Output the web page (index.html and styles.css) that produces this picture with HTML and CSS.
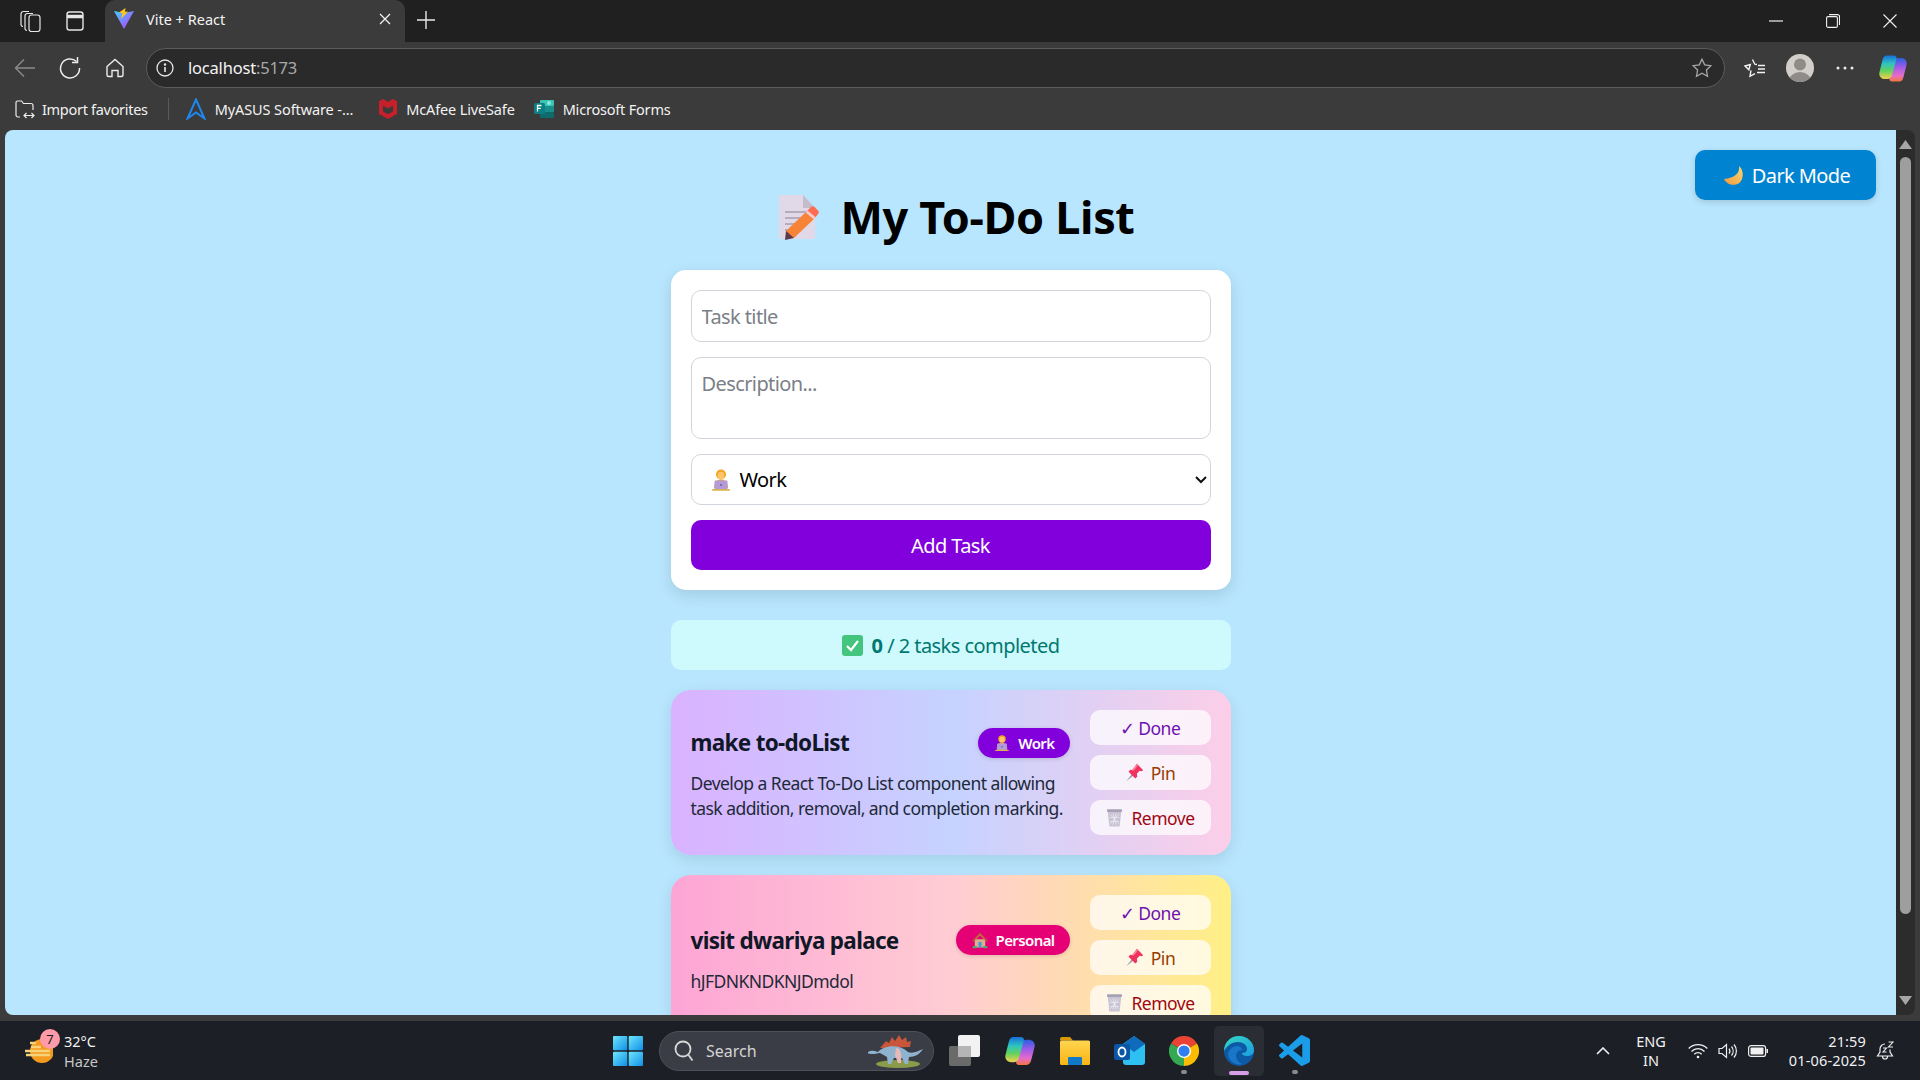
FILE: index.html
```html
<!DOCTYPE html>
<html lang="en">
<head>
<meta charset="utf-8">
<title>Vite + React</title>
<link rel="stylesheet" href="styles.css">
</head>
<body>
<svg class="defs" width="0" height="0">
  <defs>
    <linearGradient id="gMoon" x1="1" y1="0" x2="0" y2="1"><stop offset="0" stop-color="#f7d774"/><stop offset="1" stop-color="#f29a3c"/></linearGradient>
    <linearGradient id="gVite" x1="0" y1="0" x2="1" y2="1"><stop offset="0" stop-color="#41d1ff"/><stop offset="1" stop-color="#bd34fe"/></linearGradient>
    <linearGradient id="gStart" x1="0" y1="0" x2="1" y2="1"><stop offset="0" stop-color="#6fe6fb"/><stop offset="1" stop-color="#0f8fe8"/></linearGradient>
    <linearGradient id="gCopA" x1="0" y1="0" x2="0" y2="1"><stop offset="0" stop-color="#1670dc"/><stop offset=".35" stop-color="#2fc4c0"/><stop offset=".65" stop-color="#62d25e"/><stop offset="1" stop-color="#f6d14b"/></linearGradient>
    <linearGradient id="gCopB" x1="0" y1="0" x2="0" y2="1"><stop offset="0" stop-color="#2a5fe0"/><stop offset=".4" stop-color="#a25ce8"/><stop offset=".75" stop-color="#e66cc8"/><stop offset="1" stop-color="#f5763a"/></linearGradient>
    <linearGradient id="gEdge" x1="0" y1="0" x2="1" y2="1"><stop offset="0" stop-color="#36d9c0"/><stop offset="1" stop-color="#1b9de2"/></linearGradient>
    <linearGradient id="gFolder" x1="0" y1="0" x2="0" y2="1"><stop offset="0" stop-color="#ffd54f"/><stop offset="1" stop-color="#f9b515"/></linearGradient>
    <symbol id="e-tech" viewBox="0 0 24 24">
      <circle cx="12" cy="6.5" r="5" fill="#f2a31f"/>
      <ellipse cx="12" cy="7.5" rx="3.4" ry="3.8" fill="#ffc56a"/>
      <path d="M5 20c0-6 3-8.500 7-8.500s7 2.500 7 8.500z" fill="#e5a63a"/>
      <rect x="5.500" y="12.500" width="13" height="9" rx="1" fill="#b39ad8"/>
      <rect x="3" y="21" width="18" height="1.800" rx=".9" fill="#d9b24a"/>
      <circle cx="12" cy="17" r="1" fill="#6d5a99"/>
    </symbol>
    <symbol id="e-pin" viewBox="0 0 24 24">
      <path d="M1.500 23 9.500 13 11.500 15z" fill="#9aa0a6"/>
      <path d="M15 1 23 9 21 10.500 18.500 9.800 15 13.500 15.500 17.500 13 19.500 4.500 11 6.500 8.500 10.500 9 14.200 5.500 13.500 3z" fill="#f0325f"/>
      <path d="M15 1 16.500 2.500 11 9.500 8.500 9.200z" fill="#ff7d96"/>
    </symbol>
    <symbol id="e-bin" viewBox="0 0 24 24">
      <path d="M3.500 4.500h17L18.500 23.500h-13z" fill="#c9c4d4"/>
      <path d="M6.500 8l11 12M17.500 8l-11 12M10 7l4 14M14 7l-4 14M6 12h12M6.500 17h11" stroke="#f1eef5" stroke-width=".8" fill="none"/>
      <rect x="2.500" y="1.500" width="19" height="3.500" rx="1" fill="#a7a1b5"/>
    </symbol>
    <symbol id="e-home" viewBox="0 0 24 24">
      <rect x="5" y="11" width="14" height="11" fill="#d9b18c"/>
      <path d="M12 2 1.500 13l1.500 1.500L12 5.500l9 9 1.500-1.500z" fill="#b5563a"/>
      <path d="M12 5.500 5 12.500V11l7-7 7 7v1.500z" fill="#d6734f"/>
      <rect x="10" y="14.500" width="4" height="7.500" fill="#3f9fd6"/>
      <rect x="2" y="20" width="6" height="3" rx="1.500" fill="#4caf6a"/>
      <rect x="16" y="20" width="6" height="3" rx="1.500" fill="#4caf6a"/>
    </symbol>
    <symbol id="i-copilot" viewBox="0 0 28 27">
      <path d="M20 26.500h-7c-2 0-3-1.500-2.500-3.500L15 7c.6-2.500 2.500-4 4.500-4H22c4 0 6.500 3 5.500 7l-3 12c-.7 3-2 4.500-4.500 4.500z" fill="url(#gCopB)"/>
      <path d="M8 .5h7c2 0 3 1.500 2.500 3.500L13 20c-.6 2.500-2.500 4-4.500 4H6c-4 0-6.500-3-5.500-7l3-12C4.200 2 5.500.5 8 .5z" fill="url(#gCopA)"/>
    </symbol>
  </defs>
</svg>

<div class="tabstrip">
  <span class="tb-btn"><svg width="22" height="22" viewBox="0 0 22 22" fill="none" stroke="#e6e6e6" stroke-width="1.200"><rect x="10" y="5" width="11" height="16.500" rx="2.500"/><path d="M8 20.500a2 2 0 0 1-2-2V6a2.500 2.500 0 0 1 2.500-2.500H14"/><path d="M4 16.500a2 2 0 0 1-2-1.900V4a2.500 2.500 0 0 1 2.500-2.500H10"/></svg></span>
  <span class="tb-btn"><svg width="22" height="22" viewBox="0 0 22 22" fill="none" stroke="#e6e6e6" stroke-width="1.400"><rect x="3" y="2" width="16" height="18" rx="2.500"/><path d="M3 6.500h16" stroke-width="3.500"/></svg></span>
  <div class="tab">
    <svg class="tab-fav" width="20" height="22" viewBox="0 0 20 22"><path d="M0 3 10 21 20 3 10 5z" fill="url(#gVite)"/><path d="M11.500 0 5 4.500l3.500.8L7 11l7-7.500-3 .3z" fill="#ffc517"/></svg>
    <span class="tab-title">Vite + React</span>
    <svg class="tab-x" width="12" height="12" viewBox="0 0 12 12" stroke="#f0f0f0" stroke-width="1.300"><path d="M1 1l10 10M11 1 1 11"/></svg>
  </div>
  <span class="tb-plus"><svg width="18" height="18" viewBox="0 0 18 18" stroke="#e8e8e8" stroke-width="1.400"><path d="M9 0v18M0 9h18"/></svg></span>
  <div class="win-ctrls">
    <span class="win-btn"><svg width="14" height="2" viewBox="0 0 14 2"><path d="M0 1h14" stroke="#f0f0f0" stroke-width="1.200"/></svg></span>
    <span class="win-btn"><svg width="14" height="14" viewBox="0 0 14 14" fill="none" stroke="#f0f0f0" stroke-width="1.100"><rect x=".6" y="2.600" width="10.800" height="10.800" rx="1.500"/><path d="M3 .6h8.500a2 2 0 0 1 2 2V11"/></svg></span>
    <span class="win-btn"><svg width="14" height="14" viewBox="0 0 14 14" stroke="#f0f0f0" stroke-width="1.100"><path d="M.5.500l13 13M13.500.500l-13 13"/></svg></span>
  </div>
</div>

<div class="toolbar">
  <span class="tool-btn"><svg width="22" height="20" viewBox="0 0 22 20" fill="none" stroke="#8b8b8b" stroke-width="1.400"><path d="M21 10H1.500M10 1.500 1.500 10l8.500 8.500"/></svg></span>
  <span class="tool-btn"><svg width="22" height="22" viewBox="0 0 22 22" fill="none" stroke="#ececec" stroke-width="1.500"><path d="M17.500 4.500A9.500 9.500 0 1 0 20.500 11"/><path d="M18.500 0v5.500H13"/></svg></span>
  <span class="tool-btn"><svg width="20" height="20" viewBox="0 0 20 20" fill="none" stroke="#ececec" stroke-width="1.400"><path d="M2 8.500 10 1.500l8 7V17a1.500 1.500 0 0 1-1.500 1.500H13v-6H7v6H3.500A1.500 1.500 0 0 1 2 17z"/></svg></span>
  <div class="address">
    <span class="addr-info"><svg width="18" height="18" viewBox="0 0 18 18" fill="none" stroke="#e8e8e8" stroke-width="1.300"><circle cx="9" cy="9" r="8"/><path d="M9 8v5" stroke-width="1.600"/><circle cx="9" cy="5.500" r=".6" fill="#e8e8e8"/></svg></span>
    <span class="addr-host">localhost</span><span class="addr-port">:5173</span>
    <svg class="addr-star" width="20" height="20" viewBox="0 0 20 20" fill="none" stroke="#a8a8a8" stroke-width="1.300"><path d="M10 1.200l2.700 5.700 6.200.8-4.500 4.300 1.100 6.200L10 15.200l-5.500 3 1.100-6.200L1.100 7.700l6.200-.8z"/></svg>
  </div>
  <span class="tool-btn"><svg width="22" height="20" viewBox="0 0 22 20" fill="none" stroke="#f2f2f2" stroke-width="1.400"><path d="M8.500 1.500l2.300 4.700 2.200.3M7 12.300l-1 6 5-2.700M4.800 11.800 1 8l5.300-1.500z"/><path d="M14 7.500h7M14 11h7M13 14.500h8"/></svg></span>
  <span class="tool-btn tool-avatar"><svg width="28" height="28" viewBox="0 0 28 28"><defs><clipPath id="cAv"><circle cx="14" cy="14" r="14"/></clipPath></defs><circle cx="14" cy="14" r="14" fill="#d2cfcb"/><g clip-path="url(#cAv)" fill="#8e8b88"><circle cx="14" cy="10.500" r="6"/><ellipse cx="14" cy="27" rx="11" ry="9"/></g></svg></span>
  <span class="tool-btn"><svg width="18" height="4" viewBox="0 0 18 4" fill="#ececec"><circle cx="2" cy="2" r="1.500"/><circle cx="9" cy="2" r="1.500"/><circle cx="16" cy="2" r="1.500"/></svg></span>
  <span class="tool-btn"><svg class="copilot-top" width="28" height="27"><use href="#i-copilot"/></svg></span>
</div>

<div class="bookmarks">
  <span class="bm bm-import"><svg width="20" height="20" viewBox="0 0 20 20" fill="none" stroke="#ececec" stroke-width="1.200"><path d="M5 18H3a2 2 0 0 1-2-2V3.500A1.500 1.500 0 0 1 2.500 2h4l2 2.500H16A2 2 0 0 1 18 6.500V11"/><path d="M9 16.500h10M11.500 14l-2.500 2.500 2.500 2.500M16.500 14l2.500 2.500-2.500 2.500"/></svg>Import favorites</span>
  <span class="bm-sep"></span>
  <span class="bm bm-asus"><svg width="20" height="22" viewBox="0 0 20 22" fill="none" stroke="#1e88f0" stroke-width="2"><path d="M10 1.500 1.500 20.500 10 14.500l8.500 6z"/></svg>MyASUS Software -...</span>
  <span class="bm bm-mcafee"><svg width="18" height="20" viewBox="0 0 18 20" fill="#c8202a"><path d="M0 2l4.500-2L9 3l4.500-3L18 2v13l-9 5-9-5zM4 6.500v6l5 2.800 5-2.800v-6L9 9.500z"/></svg>McAfee LiveSafe</span>
  <span class="bm bm-forms"><svg width="20" height="20" viewBox="0 0 20 20"><rect x="6" y="1" width="14" height="6" rx="1" fill="#37c6b5"/><rect x="6" y="7" width="14" height="6" fill="#1a8e8a"/><rect x="6" y="13" width="14" height="6" rx="1" fill="#0f6a6c"/><circle cx="15" cy="4" r="2" fill="#8ee6d8"/><rect x="0" y="4" width="11" height="11" rx="1.500" fill="#0b7f84"/><path d="M3.500 12.500v-6h4M3.500 9.300h3.300" stroke="#fff" stroke-width="1.300" fill="none"/></svg>Microsoft Forms</span>
</div>

<div class="viewport">
  <main class="page">
    <button class="theme-btn"><svg class="ic-moon" width="20" height="19" viewBox="0 0 20 19"><path d="M15 0c1 6-3 12-15 13 3 6 10 7 14.500 4.500S21 5 15 0z" fill="url(#gMoon)"/></svg>Dark Mode</button>
    <h1 class="heading">
      <svg class="ic-memo" width="40" height="45" viewBox="0 0 40 45">
        <path d="M0 0h24l12 13v31H0z" fill="#e2d9e8"/>
        <path d="M24 0l12 13H24z" fill="#c4bccb"/>
        <path d="M6 17h22M6 23h22M6 29h14M6 35h8" stroke="#a79fb0" stroke-width="1.600"/>
        <path d="M8 43l-1-7L28 16l8 7-21 20z" fill="#f78336"/>
        <path d="M28 16l4-4c1.500-1 2.500-1 3.500 0l3.500 3.500c1 1 1 2 0 3.500l-3 4z" fill="#ff6a52"/>
        <path d="M26.500 17.500l8.500 7 2-2-8.500-7z" fill="#f3c9cc"/>
        <path d="M7 36l8 7-9 2z" fill="#5b3a4a"/>
      </svg>
      <span>My To-Do List</span>
    </h1>
    <form class="form-card">
      <input class="field field-input" type="text" placeholder="Task title">
      <textarea class="field field-area" placeholder="Description..."></textarea>
      <div class="field field-select">
        <svg class="ic-opt" width="24" height="24"><use href="#e-tech"/></svg>
        <span>Work</span>
        <svg class="chev" width="12" height="8" viewBox="0 0 12 8" fill="none" stroke="#111" stroke-width="2"><path d="M1 1l5 5 5-5"/></svg>
      </div>
      <button class="add-btn" type="button">Add Task</button>
    </form>
    <div class="progress">
      <svg width="21" height="21" viewBox="0 0 21 21"><rect width="21" height="21" rx="3" fill="#43c57e"/><path d="M5 11l4 4 7-9" fill="none" stroke="#fff" stroke-width="2.200"/></svg>
      <span><b>0</b> / 2 tasks completed</span>
    </div>
    <article class="task task-work">
      <div class="task-main">
        <div class="task-head">
          <h2 class="task-title">make to-doList</h2>
          <span class="badge badge-work"><svg width="18" height="18"><use href="#e-tech"/></svg>Work</span>
        </div>
        <p class="task-desc">Develop a React To-Do List component allowing task addition, removal, and completion marking.</p>
      </div>
      <div class="actions">
        <button class="act act-done">✓ Done</button>
        <button class="act act-pin"><svg width="19" height="19"><use href="#e-pin"/></svg>Pin</button>
        <button class="act act-remove"><svg width="19" height="19"><use href="#e-bin"/></svg>Remove</button>
      </div>
    </article>
    <article class="task task-personal">
      <div class="task-main">
        <div class="task-head">
          <h2 class="task-title">visit dwariya palace</h2>
          <span class="badge badge-personal"><svg width="18" height="18"><use href="#e-home"/></svg>Personal</span>
        </div>
        <p class="task-desc">hJFDNKNDKNJDmdol</p>
      </div>
      <div class="actions">
        <button class="act act-done">✓ Done</button>
        <button class="act act-pin"><svg width="19" height="19"><use href="#e-pin"/></svg>Pin</button>
        <button class="act act-remove"><svg width="19" height="19"><use href="#e-bin"/></svg>Remove</button>
      </div>
    </article>
  </main>
  <div class="scrollbar">
    <svg width="13" height="9" viewBox="0 0 13 9"><path d="M6.500 0l6.500 9H0z" fill="#a6a6a6"/></svg>
    <span class="thumb"></span>
    <svg width="13" height="9" viewBox="0 0 13 9"><path d="M6.500 9 13 0H0z" fill="#a6a6a6"/></svg>
  </div>
</div>

<footer class="taskbar">
  <div class="weather">
    <span class="weather-ic">
      <svg width="28" height="26" viewBox="0 0 28 26"><circle cx="17" cy="13" r="12" fill="#f39a1f"/><path d="M5 5h6M6 9h10M0 13h25M1 17h24" stroke="#f6d27a" stroke-width="2.500"/></svg>
      <span class="weather-badge">7</span>
    </span>
    <span class="weather-text"><span>32°C</span><span class="haze">Haze</span></span>
  </div>
  <div class="tb-center">
    <span class="app app-start"><svg width="30" height="30" viewBox="0 0 30 30" fill="url(#gStart)"><rect width="14.300" height="14.300" rx="1"/><rect x="15.700" width="14.300" height="14.300" rx="1"/><rect y="15.700" width="14.300" height="14.300" rx="1"/><rect x="15.700" y="15.700" width="14.300" height="14.300" rx="1"/></svg></span>
    <div class="search">
      <svg width="20" height="22" viewBox="0 0 20 22" fill="none" stroke="#d8d8d8" stroke-width="1.800"><circle cx="9" cy="9" r="7.500"/><path d="M14.500 15l4 5.500"/></svg>
      <span class="search-text">Search</span>
      <svg class="dino" width="58" height="34" viewBox="0 0 58 34">
        <ellipse cx="30" cy="30" rx="22" ry="4" fill="#8a9c4a"/>
        <path d="M12 14l6-7 3 2 3-6 3 4 4-6 3 5 4-3 1 5 4-1-1 6z" fill="#c9553a"/>
        <path d="M0 18c3-2 6-1 10 0 5-6 20-9 30 0 5 2 10-1 15-3-3 5-8 8-14 8l-1 7h-3l-3-6-8 0-3 6h-3l-1-7-7-4c-5 1-12 2-15-1z" fill="#8fb2cf"/>
        <path d="M28 14c4 0 6 4 5 15h-3l-3-8z" fill="#e7b8b8"/>
      </svg>
    </div>
    <span class="app app-view"><svg width="31" height="31" viewBox="0 0 31 31"><rect y="11" width="22" height="20" rx="2" fill="#6a6a6a"/><rect x="9" y="0" width="22" height="22" rx="2" fill="#f2f2f2"/><rect x="9" y="11" width="13" height="11" fill="#b5b5b5"/></svg></span>
    <span class="app app-cop"><svg width="30" height="30"><use href="#i-copilot"/></svg></span>
    <span class="app app-files"><svg width="30" height="28" viewBox="0 0 30 28"><path d="M0 2a2 2 0 0 1 2-2h8l3 3.500H0z" fill="#d99a08"/><rect y="3.500" width="30" height="24.500" rx="1.500" fill="url(#gFolder)"/><rect x="8" y="20" width="14" height="8" rx="1" fill="#1278c8"/></svg></span>
    <span class="app app-out"><svg width="31" height="30" viewBox="0 0 31 30"><path d="M9 8 20 0l11 8v18a3 3 0 0 1-3 3H12a3 3 0 0 1-3-3z" fill="#2dc0f0"/><path d="M20 0l11 8-11 8-11-8z" fill="#0f6cbd"/><rect y="8" width="16" height="16" rx="2" fill="#0a57a8"/><ellipse cx="8" cy="16" rx="3.500" ry="4.500" fill="none" stroke="#fff" stroke-width="1.800"/></svg></span>
    <span class="app app-chrome"><svg width="30" height="30" viewBox="0 0 24 24"><path d="M12 12 1.600 6A12 12 0 0 1 22.400 6z" fill="#ea4335"/><path d="M12 12 22.400 6A12 12 0 0 1 12 24z" fill="#fbbc04"/><path d="M12 12V24A12 12 0 0 1 1.600 6z" fill="#34a853"/><circle cx="12" cy="12" r="5.600" fill="#fff"/><circle cx="12" cy="12" r="4.500" fill="#2f7df0"/></svg><i class="dot"></i></span>
    <span class="app app-edge"><svg width="30" height="30" viewBox="0 0 30 30"><circle cx="15" cy="15" r="15" fill="#0c5aa6"/><path d="M0 15C0 6 7 0 15 0c9 0 15 7 15 14 0 4-3 6-7 6-3 0-5-1-5-3 3 0 5-1 5-4 0-4-4-7-9-7C7 6 3 10 0 15z" fill="url(#gEdge)"/><path d="M4 17c2-4 5-7 9-7 3 0 5 2 5 4-5 0-7 4-5 9 1 3 3 4 6 5-8 2-15-3-15-11z" fill="#1976c8"/></svg><i class="bar"></i></span>
    <span class="app app-code"><svg width="31" height="31" viewBox="0 0 24 24"><path fill="#1b9ce8" d="M23.150 2.587 18.210.21a1.494 1.494 0 0 0-1.705.29l-9.460 8.630-4.120-3.128a.999.999 0 0 0-1.276.057L.327 7.261A1 1 0 0 0 .326 8.740L3.899 12 .326 15.260a1 1 0 0 0 .001 1.479L1.650 17.940a.999.999 0 0 0 1.276.057l4.120-3.128 9.460 8.630a1.492 1.492 0 0 0 1.704.290l4.942-2.377A1.500 1.500 0 0 0 24 20.060V3.939a1.500 1.500 0 0 0-.850-1.352zm-5.146 14.861L10.826 12l7.178-5.448v10.896z"/></svg><i class="dot"></i></span>
  </div>
  <div class="tray">
    <svg class="tray-chev" width="14" height="8" viewBox="0 0 14 8" fill="none" stroke="#f0f0f0" stroke-width="1.600"><path d="M1 7l6-6 6 6"/></svg>
    <span class="lang"><span>ENG</span><span>IN</span></span>
    <svg class="tray-wifi" width="20" height="16" viewBox="0 0 20 16" fill="none" stroke="#f0f0f0" stroke-width="1.300"><path d="M.7 5.500a13 13 0 0 1 18.600 0M3.500 8.500a9 9 0 0 1 13 0M6.300 11.300a5 5 0 0 1 7.400 0"/><circle cx="10" cy="14" r="1.300" fill="#f0f0f0" stroke="none"/></svg>
    <svg class="tray-vol" width="20" height="16" viewBox="0 0 20 16" fill="none" stroke="#f0f0f0" stroke-width="1.200"><path d="M1 5.500h3L8.500 1.500v13L4 10.500H1z"/><path d="M11 5.500a4 4 0 0 1 0 5M13.500 3.500a7 7 0 0 1 0 9M16 1.500a10 10 0 0 1 0 13"/></svg>
    <svg class="tray-bat" width="20" height="12" viewBox="0 0 20 12"><rect x=".6" y=".6" width="17" height="10.800" rx="2.500" fill="none" stroke="#f0f0f0" stroke-width="1.200"/><rect x="2.500" y="2.500" width="13" height="7" rx="1" fill="#f0f0f0"/><rect x="18.500" y="4" width="1.500" height="4" fill="#f0f0f0"/></svg>
    <span class="clock"><span>21:59</span><span>01-06-2025</span></span>
    <svg class="tray-bell" width="18" height="20" viewBox="0 0 18 20" fill="none" stroke="#f0f0f0" stroke-width="1.200"><path d="M9 3a5 5 0 0 0-5 5v3l-2.500 4h15L14 11V8.500M6.500 15.500a2.500 2.500 0 0 0 5 0"/><path d="M7 7h3.500L7 11h3.500M12.500 1H17l-4.500 5H17" stroke-width="1.100"/></svg>
  </div>
</footer>
</body>
</html>
```

FILE: styles.css
```css
* { box-sizing: border-box; }
html, body { margin: 0; height: 100%; overflow: hidden; }
body {
  display: flex;
  flex-direction: column;
  height: 100vh;
  background: #3b3b3b;
  font-family: "Noto Sans", "Open Sans", sans-serif;
  color: #111;
}
.defs { position: absolute; }
svg { display: block; flex: none; }

/* Browser chrome */
.tabstrip {
  height: 42px;
  flex: none;
  display: flex;
  align-items: stretch;
  background: #202020;
  padding: 0 1.5px 0 7.5px;
}
.tb-btn, .tool-btn {
  width: 45px;
  flex: none;
  display: flex;
  align-items: center;
  justify-content: center;
}
.tab {
  width: 300px;
  margin-left: 7.5px;
  display: flex;
  align-items: center;
  padding: 0 14px 4px 9px;
  background: #3b3b3b;
  border-radius: 10px 10px 0 0;
  color: #f2f2f2;
  font-size: 14.5px;
  letter-spacing: 0;
}
.tab-title { margin-left: 12px; flex: 1; }
.tb-plus {
  width: 42px;
  padding-bottom: 2px;
  display: flex;
  align-items: center;
  justify-content: center;
}
.win-ctrls { margin-left: auto; display: flex; }
.win-btn {
  width: 57px;
  display: flex;
  align-items: center;
  justify-content: center;
}
.toolbar {
  height: 46px;
  flex: none;
  display: flex;
  align-items: center;
  padding: 6px 8px 0 2.5px;
}
.address {
  flex: 1;
  height: 40px;
  margin: 0 7.5px 0 8.5px;
  display: flex;
  align-items: center;
  background: #2a2a2a;
  border: 1px solid #5c5c5c;
  border-radius: 20px;
  padding: 0 12px 2px 9px;
  font-size: 16.5px;
  letter-spacing: -0.2px;
}
.addr-info { width: 32px; display: flex; margin-top: 2px; }
.addr-host { color: #f4f4f4; }
.addr-port { color: #a8a8a8; }
.addr-star { margin-left: auto; margin-top: 2px; }
.copilot-top { margin-left: 6px; }
.bookmarks {
  height: 42px;
  flex: none;
  display: flex;
  align-items: center;
  padding-left: 15px;
  font-size: 14.5px;
  letter-spacing: -0.1px;
  color: #f2f2f2;
}
.bm { display: flex; align-items: center; gap: 7px; white-space: nowrap; }
.bm-import { letter-spacing: -0.3px; }
.bm-sep { width: 1px; height: 22px; background: #5a5a5a; margin: 0 17px 0 20px; }
.bm-asus { gap: 9px; }
.bm-mcafee { margin-left: 26px; gap: 9px; letter-spacing: -0.15px; }
.bm-forms { margin-left: 19px; gap: 9px; letter-spacing: -0.2px; }

/* Viewport */
.viewport {
  height: 885px;
  flex: none;
  display: flex;
  padding: 0 5px;
}
.page {
  position: relative;
  flex: 1;
  overflow: hidden;
  background: #b8e6fe;
  border-radius: 8px 0 0 8px;
  display: flex;
  flex-direction: column;
  align-items: center;
  padding-top: 62px;
  font-size: 20px;
}
.scrollbar {
  width: 19px;
  flex: none;
  background: #2c2c2c;
  border-radius: 0 8px 8px 0;
  display: flex;
  flex-direction: column;
  align-items: center;
  padding: 10px 0 10px;
}
.thumb {
  width: 11px;
  height: 757px;
  margin: 8px 0 auto;
  border-radius: 6px;
  background: #9e9e9e;
}
.theme-btn {
  position: absolute;
  top: 20px;
  right: 20px;
  width: 181px;
  height: 50px;
  border: 0;
  border-radius: 10px;
  background: #0084d1;
  color: #fff;
  font: inherit;
  letter-spacing: -0.6px;
  display: flex;
  align-items: center;
  justify-content: center;
  gap: 8px;
  padding: 0 0 0 3px;
  box-shadow: 0 2px 6px rgba(0,0,0,.15);
}
.heading {
  margin: 0 0 28px;
  height: 50px;
  padding-left: 13px;
  display: flex;
  align-items: center;
  gap: 21px;
  font-size: 45px;
  line-height: 50px;
  font-weight: 700;
  letter-spacing: -0.35px;
  color: #000;
}
.form-card {
  width: 560px;
  height: 320px;
  flex: none;
  padding: 20px;
  background: #fff;
  border-radius: 15px;
  box-shadow: 0 5px 15px rgba(0,0,0,.12);
  display: flex;
  flex-direction: column;
  gap: 15px;
}
.field {
  width: 100%;
  display: block;
  border: 1.5px solid #d1d5dc;
  border-radius: 10px;
  background: #fff;
  padding: 10px;
  font: inherit;
  letter-spacing: -0.6px;
  color: #000;
  outline: none;
}
.field::placeholder { color: #7b7f87; opacity: 1; }
.field-input { height: 52px; }
.field-area { height: 82px; padding-top: 12px; resize: none; }
.field-select {
  height: 51px;
  display: flex;
  align-items: center;
  padding: 0 3px 0 17px;
  gap: 7px;
}
.chev { margin-left: auto; }
.add-btn {
  height: 50px;
  flex: none;
  border: 0;
  border-radius: 10px;
  background: #8200db;
  color: #fff;
  font: inherit;
  letter-spacing: -0.6px;
}
.progress {
  width: 560px;
  height: 50px;
  margin-top: 30px;
  flex: none;
  display: flex;
  align-items: center;
  justify-content: center;
  gap: 9px;
  background: #cefafe;
  border-radius: 10px;
  color: #00786f;
  letter-spacing: -0.55px;
}
.task {
  width: 560px;
  height: 165px;
  flex: none;
  margin-top: 20px;
  padding: 20px;
  display: flex;
  gap: 20px;
  border-radius: 20px;
  box-shadow: 0 5px 15px rgba(0,0,0,.1);
}
.task-work { background: linear-gradient(90deg, #dab2ff, #c6d2ff 50%, #fccee8); }
.task-personal { background: linear-gradient(90deg, #fda5d5, #ffccd3 50%, #fff085); }
.task-main {
  flex: 1;
  min-width: 0;
  padding-top: 3px;
  display: flex;
  flex-direction: column;
  justify-content: center;
}
.task-head {
  display: flex;
  align-items: center;
  justify-content: space-between;
  margin-bottom: 13px;
}
.task-title {
  margin: 0;
  font-size: 22.5px;
  font-weight: 700;
  letter-spacing: -0.7px;
  color: #101828;
  white-space: nowrap;
}
.badge {
  height: 30px;
  padding: 0 15px;
  display: flex;
  align-items: center;
  gap: 7px;
  border-radius: 15px;
  color: #fff;
  font-size: 15px;
  font-weight: 600;
  letter-spacing: -0.6px;
  box-shadow: 0 1px 4px rgba(0,0,0,.15);
}
.badge-work { background: #8200db; }
.badge-personal { background: #e60076; }
.task-desc {
  margin: 0;
  font-size: 17.5px;
  line-height: 25px;
  letter-spacing: -0.55px;
  color: #1e2939;
}
.actions {
  width: 121px;
  flex: none;
  display: flex;
  flex-direction: column;
  gap: 10px;
}
.act {
  height: 35px;
  flex: none;
  border: 0;
  border-radius: 10px;
  background: rgba(255,255,255,.72);
  font: inherit;
  font-size: 17.5px;
  letter-spacing: -0.5px;
  display: flex;
  align-items: center;
  justify-content: center;
  gap: 7px;
  padding: 0;
}
.act-done { color: #6e11b0; }
.act-pin { color: #973c00; }
.act-remove { color: #9f0712; }

/* Taskbar */
.taskbar {
  height: 59px;
  margin-top: 6px;
  flex: none;
  display: flex;
  align-items: center;
  background: #1c1f26;
  color: #f2f2f2;
  font-size: 14.5px;
  letter-spacing: 0;
}
.weather { width: 613px; flex: none; display: flex; align-items: center; padding-left: 25px; gap: 11px; }
.weather-ic { position: relative; display: block; }
.weather-badge {
  position: absolute;
  top: -9px;
  right: -7px;
  width: 20px;
  height: 20px;
  border-radius: 50%;
  background: #ff9aa8;
  color: #1a1a1a;
  display: flex;
  align-items: center;
  justify-content: center;
  font-size: 13px;
}
.weather-text { display: flex; flex-direction: column; line-height: 20px; }
.haze { color: #c8c8c8; }
.tb-center { display: flex; align-items: center; }
.app {
  position: relative;
  display: flex;
  align-items: center;
  justify-content: center;
  flex: none;
}
.app-start { width: 30px; }
.search {
  width: 275px;
  height: 40px;
  margin-left: 16px;
  flex: none;
  display: flex;
  align-items: center;
  padding: 0 7px 0 14px;
  gap: 12px;
  border-radius: 20px;
  background: #3a3d45;
  border: 1px solid #4e5159;
  color: #d4d4d4;
  font-size: 16px;
}
.dino { margin-left: auto; }
.app-view { width: 31px; margin-left: 15px; }
.app-cop { width: 30px; margin-left: 25px; }
.app-files { width: 30px; margin-left: 25px; }
.app-out { width: 31px; margin-left: 24px; }
.app-chrome { width: 30px; margin-left: 24px; }
.app-edge {
  width: 50px;
  height: 50px;
  margin-left: 15px;
  background: #2a2d34;
  border-radius: 5px;
}
.app-code { width: 31px; margin-left: 15px; }
.dot, .bar {
  position: absolute;
  bottom: -8px;
  left: 50%;
  width: 6px;
  height: 4px;
  margin-left: -3px;
  border-radius: 2px;
  background: #8b8b8b;
}
.bar {
  bottom: 1px;
  width: 20px;
  margin-left: -10px;
  background: #d69ee6;
}
.tray { margin-left: auto; display: flex; align-items: center; padding-right: 26px; }
.tray-chev { margin-right: 21px; }
.lang { width: 40px; display: flex; flex-direction: column; align-items: center; line-height: 19px; margin-right: 17px; }
.tray-vol { margin-left: 10px; }
.tray-bat { margin-left: 10px; }
.clock { width: 98px; display: flex; flex-direction: column; align-items: flex-end; line-height: 19px; margin-right: 10px; letter-spacing: 0.15px; }
```
